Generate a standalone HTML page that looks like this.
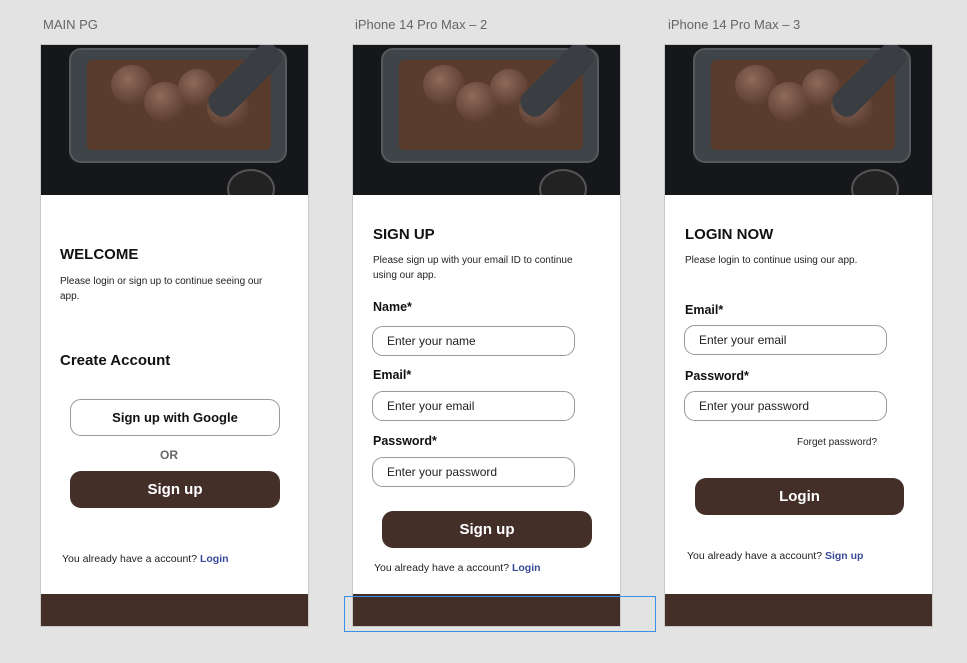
<!DOCTYPE html>
<html><head><style>
*{margin:0;padding:0;box-sizing:border-box}
body{width:967px;height:663px;background:#e3e3e3;font-family:"Liberation Sans",sans-serif;position:relative;overflow:hidden;color:#111}
.lbl{position:absolute;top:17px;font-size:13px;color:#666}
.fr{position:absolute;top:44px;width:269px;height:583px;background:#fff;border:1px solid #c8c8c8}
.img{position:absolute;left:0;top:0;width:267px;height:150px;background:#16171a;overflow:hidden}
.tray{position:absolute;left:28px;top:3px;width:218px;height:115px;border-radius:12px;background:#3e4448;border:2px solid #55595c}
.in{position:absolute;left:16px;top:10px;width:184px;height:90px;border-radius:5px;background:#5a3c2c}
.ball{position:absolute;border-radius:50%;background:radial-gradient(circle at 40% 35%,#8e6a5a,#5d3f33 70%)}
.scoop{position:absolute;left:190px;top:-10px;width:28px;height:90px;background:#3a3d41;transform:rotate(45deg);border-radius:12px}
.bowl{position:absolute;left:186px;top:124px;width:48px;height:40px;border-radius:50%;background:#222;border:2px solid #555}
.foot{position:absolute;left:0;bottom:0;width:267px;height:32px;background:#432f28}
.a{position:absolute;white-space:nowrap}
h2{position:absolute;font-size:15px;font-weight:bold;color:#111}
.p{position:absolute;font-size:10px;line-height:15px;color:#222}
.lab{position:absolute;font-size:12.5px;font-weight:bold}
.inp{position:absolute;width:203px;height:30px;border:1px solid #999;border-radius:11px;font-size:12px;padding-left:14px;line-height:28px;color:#222}
.btn{position:absolute;height:37px;border-radius:11px;background:#432f28;color:#fff;font-weight:bold;font-size:15px;text-align:center;line-height:37px}
.acc{position:absolute;font-size:10.5px;color:#222}
.acc b{color:#3a4a9a}
</style></head><body>
<div class="lbl" style="left:43px">MAIN PG</div>
<div class="lbl" style="left:355px">iPhone 14 Pro Max – 2</div>
<div class="lbl" style="left:668px">iPhone 14 Pro Max – 3</div>

<div class="fr" style="left:40px">
 <div class="img"><div class="tray"><div class="in"></div></div><div class="ball" style="left:70px;top:20px;width:42px;height:40px"></div><div class="ball" style="left:103px;top:37px;width:42px;height:40px"></div><div class="ball" style="left:137px;top:24px;width:38px;height:38px"></div><div class="ball" style="left:166px;top:43px;width:42px;height:40px"></div><div class="scoop"></div><div class="bowl"></div></div>
 <h2 style="left:19px;top:201px">WELCOME</h2>
 <div class="p" style="left:19px;top:229px">Please login or sign up to continue seeing our<br>app.</div>
 <h2 style="left:19px;top:307px">Create Account</h2>
 <div class="a" style="left:29px;top:354px;width:210px;height:37px;border:1px solid #999;border-radius:11px;text-align:center;line-height:35px;font-size:13px;font-weight:bold">Sign up with Google</div>
 <div class="a" style="left:119px;top:403px;font-size:12px;font-weight:bold;color:#666">OR</div>
 <div class="btn" style="left:29px;top:426px;width:210px">Sign up</div>
 <div class="acc" style="left:21px;top:508px">You already have a account? <b>Login</b></div>
 <div class="foot"></div>
</div>

<div class="fr" style="left:352px">
 <div class="img"><div class="tray"><div class="in"></div></div><div class="ball" style="left:70px;top:20px;width:42px;height:40px"></div><div class="ball" style="left:103px;top:37px;width:42px;height:40px"></div><div class="ball" style="left:137px;top:24px;width:38px;height:38px"></div><div class="ball" style="left:166px;top:43px;width:42px;height:40px"></div><div class="scoop"></div><div class="bowl"></div></div>
 <h2 style="left:20px;top:181px">SIGN UP</h2>
 <div class="p" style="left:20px;top:208px">Please sign up with your email ID to continue<br>using our app.</div>
 <div class="lab" style="left:20px;top:255px">Name*</div>
 <div class="inp" style="left:19px;top:281px">Enter your name</div>
 <div class="lab" style="left:20px;top:323px">Email*</div>
 <div class="inp" style="left:19px;top:346px">Enter your email</div>
 <div class="lab" style="left:20px;top:389px">Password*</div>
 <div class="inp" style="left:19px;top:412px">Enter your password</div>
 <div class="btn" style="left:29px;top:466px;width:210px">Sign up</div>
 <div class="acc" style="left:21px;top:517px">You already have a account? <b>Login</b></div>
 <div class="foot"></div>
</div>

<div class="fr" style="left:664px">
 <div class="img"><div class="tray"><div class="in"></div></div><div class="ball" style="left:70px;top:20px;width:42px;height:40px"></div><div class="ball" style="left:103px;top:37px;width:42px;height:40px"></div><div class="ball" style="left:137px;top:24px;width:38px;height:38px"></div><div class="ball" style="left:166px;top:43px;width:42px;height:40px"></div><div class="scoop"></div><div class="bowl"></div></div>
 <h2 style="left:20px;top:181px">LOGIN NOW</h2>
 <div class="p" style="left:20px;top:208px">Please login to continue using our app.</div>
 <div class="lab" style="left:20px;top:258px">Email*</div>
 <div class="inp" style="left:19px;top:280px">Enter your email</div>
 <div class="lab" style="left:20px;top:324px">Password*</div>
 <div class="inp" style="left:19px;top:346px">Enter your password</div>
 <div class="acc" style="left:132px;top:392px;font-size:10px">Forget password?</div>
 <div class="btn" style="left:30px;top:433px;width:209px">Login</div>
 <div class="acc" style="left:22px;top:505px">You already have a account? <b>Sign up</b></div>
 <div class="foot"></div>
</div>

<div style="position:absolute;left:344px;top:596px;width:312px;height:36px;border:1.5px solid #3a8ee6"></div>
</body></html>
